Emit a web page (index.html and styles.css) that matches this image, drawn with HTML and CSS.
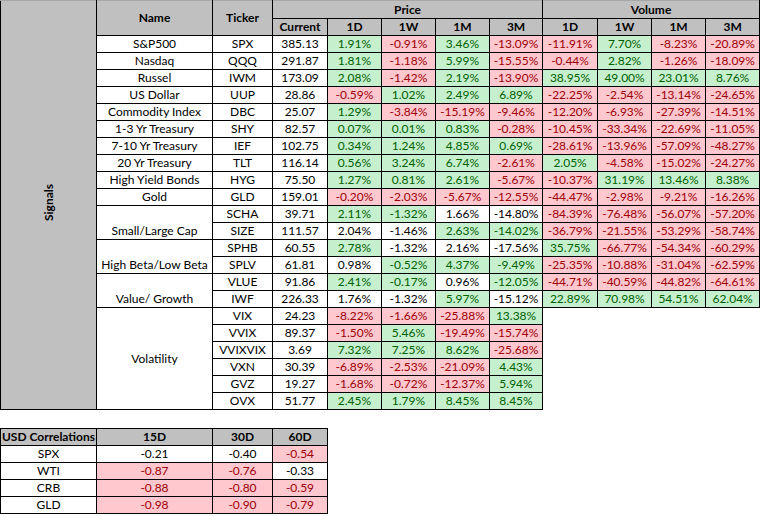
FILE: index.html
```html
<!DOCTYPE html>
<html>
<head>
<meta charset="utf-8">
<link rel="stylesheet" href="styles.css">
</head>
<body>
<table class="sig">
<colgroup>
<col class="c-sig"><col class="c-name"><col class="c-tick"><col class="c-cur">
<col class="c-p"><col class="c-p"><col class="c-p"><col class="c-p3">
<col class="c-v1"><col class="c-p"><col class="c-p"><col class="c-p">
</colgroup>
<tr class="top">
<td class="side" rowspan="24"><span class="vtext">Signals</span></td>
<td class="hd" rowspan="2">Name</td>
<td class="hd" rowspan="2">Ticker</td>
<td class="hd" colspan="5">Price</td>
<td class="hd" colspan="4">Volume</td>
</tr>
<tr>
<td class="hd">Current</td><td class="hd">1D</td><td class="hd">1W</td><td class="hd">1M</td><td class="hd">3M</td>
<td class="hd">1D</td><td class="hd">1W</td><td class="hd">1M</td><td class="hd">3M</td>
</tr>
<tr><td>S&amp;P500</td><td>SPX</td><td>385.13</td><td class="g">1.91%</td><td class="r">-0.91%</td><td class="g">3.46%</td><td class="r">-13.09%</td><td class="r">-11.91%</td><td class="g">7.70%</td><td class="r">-8.23%</td><td class="r">-20.89%</td></tr>
<tr><td>Nasdaq</td><td>QQQ</td><td>291.87</td><td class="g">1.81%</td><td class="r">-1.18%</td><td class="g">5.99%</td><td class="r">-15.55%</td><td class="r">-0.44%</td><td class="g">2.82%</td><td class="r">-1.26%</td><td class="r">-18.09%</td></tr>
<tr><td>Russel</td><td>IWM</td><td>173.09</td><td class="g">2.08%</td><td class="r">-1.42%</td><td class="g">2.19%</td><td class="r">-13.90%</td><td class="g">38.95%</td><td class="g">49.00%</td><td class="g">23.01%</td><td class="g">8.76%</td></tr>
<tr><td>US Dollar</td><td>UUP</td><td>28.86</td><td class="r">-0.59%</td><td class="g">1.02%</td><td class="g">2.49%</td><td class="g">6.89%</td><td class="r">-22.25%</td><td class="r">-2.54%</td><td class="r">-13.14%</td><td class="r">-24.65%</td></tr>
<tr><td>Commodity Index</td><td>DBC</td><td>25.07</td><td class="g">1.29%</td><td class="r">-3.84%</td><td class="r">-15.19%</td><td class="r">-9.46%</td><td class="r">-12.20%</td><td class="r">-6.93%</td><td class="r">-27.39%</td><td class="r">-14.51%</td></tr>
<tr><td>1-3 Yr Treasury</td><td>SHY</td><td>82.57</td><td class="g">0.07%</td><td class="g">0.01%</td><td class="g">0.83%</td><td class="r">-0.28%</td><td class="r">-10.45%</td><td class="r">-33.34%</td><td class="r">-22.69%</td><td class="r">-11.05%</td></tr>
<tr><td>7-10 Yr Treasury</td><td>IEF</td><td>102.75</td><td class="g">0.34%</td><td class="g">1.24%</td><td class="g">4.85%</td><td class="g">0.69%</td><td class="r">-28.61%</td><td class="r">-13.96%</td><td class="r">-57.09%</td><td class="r">-48.27%</td></tr>
<tr><td>20 Yr Treasury</td><td>TLT</td><td>116.14</td><td class="g">0.56%</td><td class="g">3.24%</td><td class="g">6.74%</td><td class="r">-2.61%</td><td class="g">2.05%</td><td class="r">-4.58%</td><td class="r">-15.02%</td><td class="r">-24.27%</td></tr>
<tr><td>High Yield Bonds</td><td>HYG</td><td>75.50</td><td class="g">1.27%</td><td class="g">0.81%</td><td class="g">2.61%</td><td class="r">-5.67%</td><td class="r">-10.37%</td><td class="g">31.19%</td><td class="g">13.46%</td><td class="g">8.38%</td></tr>
<tr><td>Gold</td><td>GLD</td><td>159.01</td><td class="r">-0.20%</td><td class="r">-2.03%</td><td class="r">-5.67%</td><td class="r">-12.55%</td><td class="r">-44.47%</td><td class="r">-2.98%</td><td class="r">-9.21%</td><td class="r">-16.26%</td></tr>
<tr><td class="bot" rowspan="2">Small/Large Cap</td><td>SCHA</td><td>39.71</td><td class="g">2.11%</td><td class="g">-1.32%</td><td>1.66%</td><td>-14.80%</td><td class="r">-84.39%</td><td class="r">-76.48%</td><td class="r">-56.07%</td><td class="r">-57.20%</td></tr>
<tr><td>SIZE</td><td>111.57</td><td>2.04%</td><td>-1.46%</td><td class="g">2.63%</td><td class="g">-14.02%</td><td class="r">-36.79%</td><td class="r">-21.55%</td><td class="r">-53.29%</td><td class="r">-58.74%</td></tr>
<tr><td class="bot" rowspan="2">High Beta/Low Beta</td><td>SPHB</td><td>60.55</td><td class="g">2.78%</td><td>-1.32%</td><td>2.16%</td><td>-17.56%</td><td class="g">35.75%</td><td class="r">-66.77%</td><td class="r">-54.34%</td><td class="r">-60.29%</td></tr>
<tr><td>SPLV</td><td>61.81</td><td>0.98%</td><td class="g">-0.52%</td><td class="g">4.37%</td><td class="g">-9.49%</td><td class="r">-25.35%</td><td class="r">-10.88%</td><td class="r">-31.04%</td><td class="r">-62.59%</td></tr>
<tr><td class="bot" rowspan="2">Value/ Growth</td><td>VLUE</td><td>91.86</td><td class="g">2.41%</td><td class="g">-0.17%</td><td>0.96%</td><td class="g">-12.05%</td><td class="r">-44.71%</td><td class="r">-40.59%</td><td class="r">-44.82%</td><td class="r">-64.61%</td></tr>
<tr><td>IWF</td><td>226.33</td><td>1.76%</td><td>-1.32%</td><td class="g">5.97%</td><td>-15.12%</td><td class="g">22.89%</td><td class="g">70.98%</td><td class="g">54.51%</td><td class="g">62.04%</td></tr>
<tr><td rowspan="6">Volatility</td><td>VIX</td><td>24.23</td><td class="r">-8.22%</td><td class="r">-1.66%</td><td class="r">-25.88%</td><td class="g">13.38%</td><td class="empty" rowspan="6" colspan="4"></td></tr>
<tr><td>VVIX</td><td>89.37</td><td class="r">-1.50%</td><td class="g">5.46%</td><td class="r">-19.49%</td><td class="r">-15.74%</td></tr>
<tr><td>VVIXVIX</td><td>3.69</td><td class="g">7.32%</td><td class="g">7.25%</td><td class="g">8.62%</td><td class="r">-25.68%</td></tr>
<tr><td>VXN</td><td>30.39</td><td class="r">-6.89%</td><td class="r">-2.53%</td><td class="r">-21.09%</td><td class="g">4.43%</td></tr>
<tr><td>GVZ</td><td>19.27</td><td class="r">-1.68%</td><td class="r">-0.72%</td><td class="r">-12.37%</td><td class="g">5.94%</td></tr>
<tr><td>OVX</td><td>51.77</td><td class="g">2.45%</td><td class="g">1.79%</td><td class="g">8.45%</td><td class="g">8.45%</td></tr>
</table>

<table class="corr">
<colgroup>
<col class="c-sig"><col class="c-name"><col class="c-tick"><col class="c-cur">
</colgroup>
<tr><td class="hd">USD Correlations</td><td class="hd">15D</td><td class="hd">30D</td><td class="hd">60D</td></tr>
<tr><td>SPX</td><td>-0.21</td><td>-0.40</td><td class="r">-0.54</td></tr>
<tr><td>WTI</td><td class="r">-0.87</td><td class="r">-0.76</td><td>-0.33</td></tr>
<tr><td>CRB</td><td class="r">-0.88</td><td class="r">-0.80</td><td class="r">-0.59</td></tr>
<tr><td>GLD</td><td class="r">-0.98</td><td class="r">-0.90</td><td class="r">-0.79</td></tr>
</table>
</body>
</html>
```
FILE: styles.css
```css
html, body {
  margin: 0;
  padding: 0;
  background: #ffffff;
}
body {
  font-family: Lato, "Liberation Sans", sans-serif;
  font-size: 12px;
  color: #000000;
}
table {
  border-collapse: collapse;
  table-layout: fixed;
}
.sig { width: 759px; }
.corr { width: 327px; margin-top: 18px; }
.c-sig { width: 96px; }
.c-name { width: 116px; }
.c-tick { width: 60px; }
.c-cur { width: 55px; }
.c-p { width: 54px; }
.c-p3 { width: 53px; }
.c-v1 { width: 55px; }
td {
  border: 1px solid #000000;
  padding: 0;
  height: 16px;
  line-height: 16px;
  text-align: center;
  vertical-align: middle;
  white-space: nowrap;
  overflow: hidden;
}
.top td { border-top-color: #a6a6a6; height: 17px; }
.hd {
  background: #c0c0c0;
  font-weight: bold;
}
.side {
  background: #c0c0c0;
  vertical-align: middle;
}
.vtext {
  display: inline-block;
  writing-mode: vertical-rl;
  transform: rotate(180deg);
  font-weight: bold;
  font-size: 12px;
  line-height: 14px;
}
.bot { vertical-align: bottom; }
.g { background: #c6efce; color: #006100; }
.r { background: #ffc7ce; color: #9c0006; }
.empty { border: none; background: #ffffff; }
```
